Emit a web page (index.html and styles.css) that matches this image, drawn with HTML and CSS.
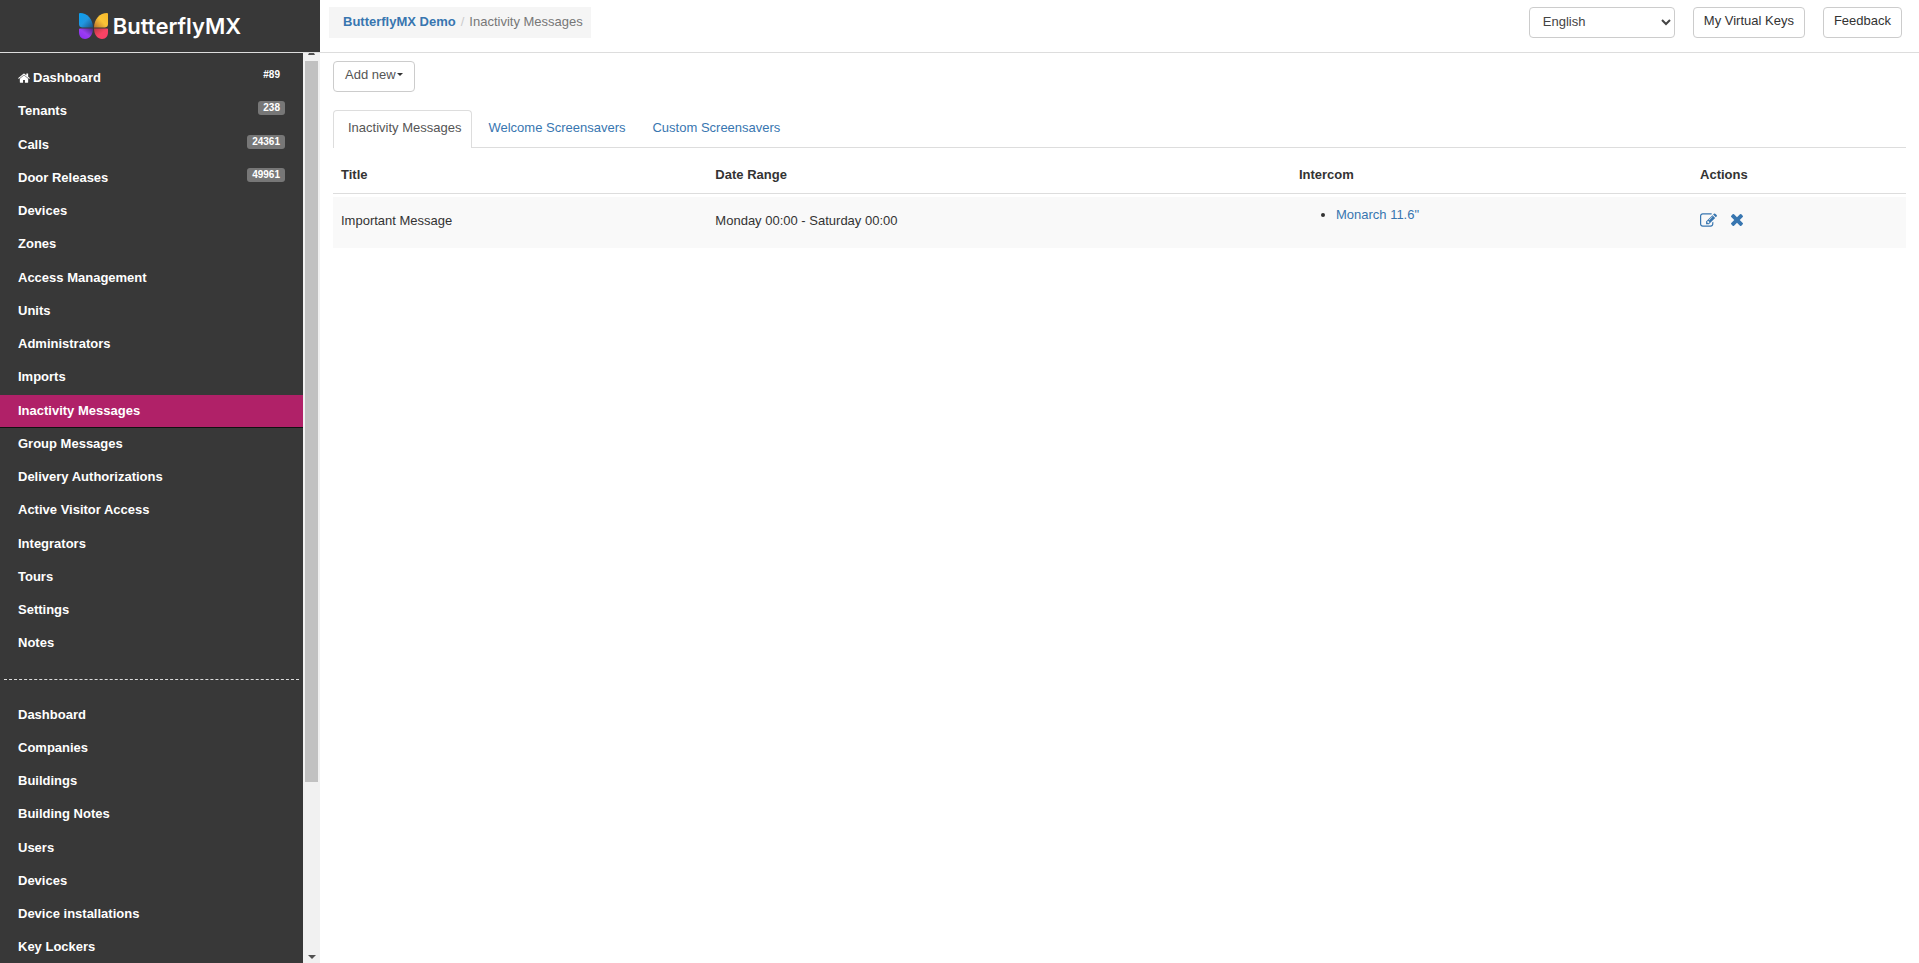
FILE: index.html
```html
<!DOCTYPE html>
<html lang="en">
<head>
<meta charset="utf-8">
<title>Inactivity Messages - ButterflyMX</title>
<link rel="stylesheet" href="styles.css">
</head>
<body>
<header class="topbar">
  <a class="brand" href="#">
    <svg class="brand-mark" viewBox="0 0 29 26" aria-hidden="true">
      <defs>
        <linearGradient id="g1" x1="0" y1="0" x2="1" y2="1"><stop offset="0" stop-color="#0aa0f0"/><stop offset=".5" stop-color="#2196e0"/><stop offset="1" stop-color="#1c4f80"/></linearGradient>
        <linearGradient id="g2" x1="1" y1="0" x2="0" y2="1"><stop offset="0" stop-color="#f5b82a"/><stop offset=".5" stop-color="#fbc437"/><stop offset="1" stop-color="#b8702c"/></linearGradient>
        <linearGradient id="g3" x1="0" y1="1" x2="1" y2="0"><stop offset="0" stop-color="#8a2bf0"/><stop offset=".5" stop-color="#9b3cf2"/><stop offset="1" stop-color="#4c2b80"/></linearGradient>
        <linearGradient id="g4" x1="1" y1="1" x2="0" y2="0"><stop offset="0" stop-color="#fb3e6a"/><stop offset=".5" stop-color="#f84463"/><stop offset="1" stop-color="#b83a3f"/></linearGradient>
      </defs>
      <path fill="url(#g1)" d="M1 0C8 0 14 6 14 14.500H3Q0 14 0 11V1Q0 0 1 0Z"/>
      <path fill="url(#g2)" d="M28 0C21 0 15 6 15 14.500H26Q29 14 29 11V1Q29 0 28 0Z"/>
      <path fill="url(#g3)" d="M1 15.500H14C14 22 10 26 6 26C2 26 0 23 0 19V16Q0 15.500 1 15.500Z"/>
      <path fill="url(#g4)" d="M28 15.500H15C15 22 19 26 23 26C27 26 29 23 29 19V16Q29 15.500 28 15.500Z"/>
    </svg>
    <span>ButterflyMX</span>
  </a>
  <div class="topbar-main">
    <nav class="breadcrumb" aria-label="Breadcrumb">
      <a href="#">ButterflyMX Demo</a>
      <span class="divider">/</span>
      <span>Inactivity Messages</span>
    </nav>
    <div class="tools">
      <select class="control language" aria-label="Language"><option>English</option></select>
      <button class="control btn" type="button">My Virtual Keys</button>
      <button class="control btn" type="button">Feedback</button>
    </div>
  </div>
</header>
<div class="body">
  <aside class="sidebar">
    <nav class="menu">
      <a class="item" href="#"><svg class="home" viewBox="0 0 1664 1312" aria-hidden="true"><path fill="currentColor" d="M1408 768v480q0 26-19 45t-45 19H960V928H704v384H320q-26 0-45-19t-19-45V768q0-1 .5-3t.5-3l575-474 575 474q1 2 1 6zm223-69l-62 74q-8 9-21 11h-3q-13 0-21-7L832 200 140 777q-12 8-24 7-13-2-21-11l-62-74q-8-10-7-23.500t11-21.500L756 55q32-26 76-26t76 26l244 204V64q0-14 9-23t23-9h192q14 0 23 9t9 23v408l219 182q10 8 11 21.500t-7 23.500z"/></svg>Dashboard<span class="badge plain">#89</span></a>
      <a class="item" href="#">Tenants<span class="badge">238</span></a>
      <a class="item" href="#">Calls<span class="badge">24361</span></a>
      <a class="item" href="#">Door Releases<span class="badge">49961</span></a>
      <a class="item" href="#">Devices</a>
      <a class="item" href="#">Zones</a>
      <a class="item" href="#">Access Management</a>
      <a class="item" href="#">Units</a>
      <a class="item" href="#">Administrators</a>
      <a class="item" href="#">Imports</a>
      <a class="item active" href="#" aria-current="page">Inactivity Messages</a>
      <a class="item" href="#">Group Messages</a>
      <a class="item" href="#">Delivery Authorizations</a>
      <a class="item" href="#">Active Visitor Access</a>
      <a class="item" href="#">Integrators</a>
      <a class="item" href="#">Tours</a>
      <a class="item" href="#">Settings</a>
      <a class="item" href="#">Notes</a>
      <hr class="separator">
      <a class="item" href="#">Dashboard</a>
      <a class="item" href="#">Companies</a>
      <a class="item" href="#">Buildings</a>
      <a class="item" href="#">Building Notes</a>
      <a class="item" href="#">Users</a>
      <a class="item" href="#">Devices</a>
      <a class="item" href="#">Device installations</a>
      <a class="item" href="#">Key Lockers</a>
    </nav>
    <div class="scrollbar" aria-hidden="true">
      <svg class="arrow-up" viewBox="0 0 7 2"><path fill="#505050" d="M1 0h5l1 2H0z"/></svg>
      <div class="track"><div class="thumb"></div></div>
      <svg class="arrow-down" viewBox="0 0 8 4"><path fill="#505050" d="M0 0h8L4 4z"/></svg>
    </div>
  </aside>
  <main class="content">
    <button class="control btn add" type="button">Add new<span class="caret"></span></button>
    <nav class="tabs">
      <a class="tab current" href="#">Inactivity Messages</a>
      <a class="tab" href="#">Welcome Screensavers</a>
      <a class="tab" href="#">Custom Screensavers</a>
    </nav>
    <table class="messages">
      <thead>
        <tr><th class="col-title">Title</th><th class="col-range">Date Range</th><th class="col-intercom">Intercom</th><th>Actions</th></tr>
      </thead>
      <tbody>
        <tr>
          <td>Important Message</td>
          <td>Monday 00:00 - Saturday 00:00</td>
          <td><ul class="intercoms"><li><a href="#">Monarch 11.6"</a></li></ul></td>
          <td>
            <div class="actions">
              <a href="#" aria-label="Edit"><svg class="edit" viewBox="0 0 1792 1408" aria-hidden="true"><path fill="currentColor" d="M888 1056l116-116-152-152-116 116v56h96v96h56zm440-720q-16-16-33 1L945 687q-17 17-1 33t33-1l350-350q17-17 1-33zm80 594v190q0 119-84.500 203.500T1120 1408H288q-119 0-203.500-84.500T0 1120V288Q0 169 84.500 84.500T288 0h832q63 0 117 25 15 7 18 23 3 17-9 29l-49 49q-14 14-32 8-23-6-45-6H288q-66 0-113 47t-47 113v832q0 66 47 113t113 47h832q66 0 113-47t47-113V994q0-13 9-22l64-64q15-15 35-7t20 29zm-96-738l288 288-672 672H640V864zm444 132l-92 92-288-288 92-92q28-28 68-28t68 28l152 152q28 28 28 68t-28 68z"/></svg></a>
              <a href="#" aria-label="Delete"><svg class="remove" viewBox="110 366 1188 1188" aria-hidden="true"><path fill="currentColor" d="M1298 1322q0 40-28 68l-136 136q-28 28-68 28t-68-28L704 1232l-294 294q-28 28-68 28t-68-28l-136-136q-28-28-28-68t28-68l294-294-294-294q-28-28-28-68t28-68l136-136q28-28 68-28t68 28l294 294 294-294q28-28 68-28t68 28l136 136q28 28 28 68t-28 68L976 960l294 294q28 28 28 68z"/></svg></a>
            </div>
          </td>
        </tr>
      </tbody>
    </table>
  </main>
</div>
</body>
</html>
```

FILE: styles.css
```css
* { box-sizing: border-box; }

body {
  margin: 0;
  height: 100vh;
  display: flex;
  flex-direction: column;
  overflow: hidden;
  background: #fff;
  color: #333;
  font: 13px/19px "Liberation Sans", Arial, sans-serif;
}

a { color: #3876b0; text-decoration: none; }

/* Top bar */
.topbar {
  display: flex;
  flex: none;
  border-bottom: 1px solid #ddd;
}

.brand {
  flex: none;
  width: 320px;
  height: 52px;
  display: flex;
  align-items: center;
  justify-content: center;
  gap: 5px;
  background: #383838;
  color: #fff;
  font: 600 22px/28px Inter, sans-serif;
}

.brand-mark { width: 29px; height: 26px; }

.topbar-main {
  flex: 1;
  display: flex;
  justify-content: space-between;
  align-items: flex-start;
  padding: 7px 17px 0 9px;
}

.breadcrumb {
  display: flex;
  gap: 5px;
  padding: 5px 8px 7px 14px;
  background: #f5f5f5;
  color: #777;
}

.breadcrumb a { font-weight: bold; }
.breadcrumb .divider { color: #ccc; }

.tools { display: flex; gap: 18px; }

.control {
  height: 31px;
  border: 1px solid #ccc;
  border-radius: 4px;
  background: #fff;
  color: #444;
  font: inherit;
}

.btn { padding: 0 10px 4px; color: #333; }
.language { width: 146px; padding: 0 9px 2px; }

/* Sidebar */
.body { flex: 1; display: flex; min-height: 0; }

.sidebar { flex: none; width: 320px; display: flex; }

.menu {
  flex: 1;
  overflow: hidden;
  padding-top: 9px;
  background: #383838;
}

.item {
  display: flex;
  align-items: center;
  padding: 8px 18px;
  border-bottom: 1px solid transparent;
  color: #fff;
  font-weight: bold;
  line-height: 1.25;
}

.item.active { background: #b02168; border-bottom-color: #111; }

.home { width: 12px; height: 10px; margin-right: 3px; }

.badge {
  margin: -3px 0 3px auto;
  padding: 0 5px;
  border-radius: 3px;
  background: #777;
  font-size: 10px;
  line-height: 14px;
}

.badge.plain { background: none; }

.separator {
  margin: 18px 4px 19px;
  border: 0;
  border-top: 1px dashed #ddd;
}

.scrollbar {
  width: 17px;
  display: flex;
  flex-direction: column;
  align-items: center;
  background: #f1f1f1;
}

.arrow-up { width: 7px; height: 2px; }
.arrow-down { width: 8px; height: 4px; margin: 4px 0; }
.track { flex: 1; padding-top: 6px; }
.thumb { width: 13px; height: 81%; background: #c1c1c1; }

/* Content */
.content { flex: 1; padding: 8px 13px 0; }

.add {
  display: flex;
  align-items: center;
  padding: 0 11px 4px;
  color: #555;
}

.caret {
  border: 3px solid transparent;
  border-top-color: #333;
  border-bottom: 0;
  margin-left: 1px;
}

.tabs {
  display: flex;
  gap: 1px;
  margin-top: 18px;
  border-bottom: 1px solid #ddd;
}

.tab {
  padding: 7px 10px 10px 14px;
  border: 1px solid transparent;
  border-bottom: 0;
  border-radius: 4px 4px 0 0;
}

.tab.current {
  margin-bottom: -1px;
  padding-bottom: 11px;
  border-color: #ddd;
  background: #fff;
  color: #555;
}

.messages {
  width: 100%;
  table-layout: fixed;
  border-collapse: separate;
  border-spacing: 0;
}

.messages th {
  padding: 17px 8px 9px;
  border-bottom: 1px solid #ddd;
  text-align: left;
}

.messages td {
  padding: 8px 8px 13px;
  background: #f9f9f9;
  border-top: 3px solid #fff;
}

.col-title { width: 23.8%; }
.col-range { width: 37.1%; }
.col-intercom { width: 25.5%; }

.intercoms { margin: 0 0 11px; padding-left: 37px; }

.actions { display: flex; align-items: center; gap: 14px; }
.actions a { display: flex; }
.edit { width: 17px; height: 14px; }
.remove { width: 12px; height: 12px; }
```
